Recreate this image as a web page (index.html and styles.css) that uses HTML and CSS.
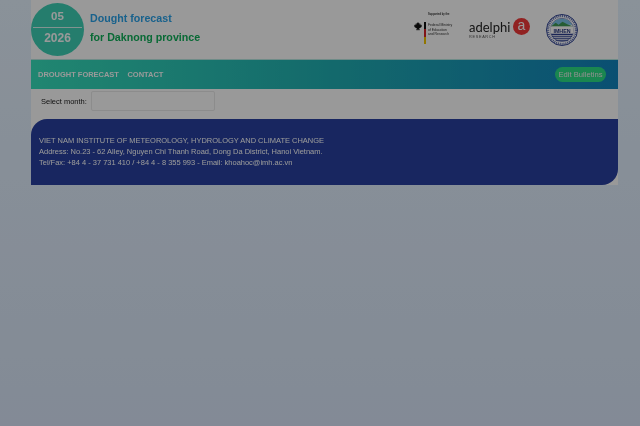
FILE: index.html
```html
<!DOCTYPE html>
<html lang="en">

<head>
  <meta charset="UTF-8" />
  <title>Drought forecast</title>
  <meta name="viewport" content="width=device-width, initial-scale=1.0" />
  <link rel="stylesheet" href="styles.css">
</head>

<body>
  <div class="page">
    <header class="top">
      <div class="date-badge">
        <span class="date-month">05</span>
        <span class="date-year">2026</span>
      </div>
      <div class="titles">
        <div class="title-blue">Dought forecast</div>
        <div class="title-green">for Daknong province</div>
      </div>
      <div class="logos">
        <div class="logo-bmbf">
          <div class="bmbf-top">Supported by the</div>
          <div class="bmbf-row">
            <svg class="bmbf-eagle" width="8" height="9" viewBox="0 0 8 9">
              <path d="M4 0 L4.800 1.200 L5.500 1 L5.200 3 L6 1.500 L6.500 2 L6.200 3.500 L7 2.500 L7.800 3.500 L7.500 5 L6 6 L5.200 6 L5.800 8.500 L4.500 7.500 L4 9 L3.500 7.500 L2.200 8.500 L2.800 6 L2 6 L0.500 5 L0.200 3.500 L1 2.500 L1.800 3.500 L1.500 2 L2 1.500 L2.800 3 L2.500 1 L3.200 1.200 Z" fill="#111" />
            </svg>
            <div class="bmbf-flag"><i class="flag-black"></i><i class="flag-red"></i><i class="flag-gold"></i></div>
            <div class="bmbf-text">Federal Ministry<br>of Education<br>and Research</div>
          </div>
        </div>
        <div class="logo-adelphi">
          <div class="adelphi-words">
            <div class="adelphi-name">adelphi</div>
            <div class="adelphi-sub">RESEARCH</div>
          </div>
          <div class="adelphi-mark">a</div>
        </div>
        <svg class="logo-imhen" width="32" height="32" viewBox="0 0 33 33">
          <circle cx="16.500" cy="16.500" r="16" fill="#fff" stroke="#2c3f8f" stroke-width="1" />
          <circle cx="16.500" cy="16.500" r="14.500" fill="none" stroke="#5a6bb0" stroke-width="2.400" stroke-dasharray="1 1" />
          <circle cx="16.500" cy="16.500" r="12" fill="#fff" stroke="#2c3f8f" stroke-width="0.600" />
          <path d="M6 11 A12 12 0 0 1 27 11 Z" fill="#7cc4e8" />
          <path d="M5 13 L10 9 L13 11 L17 8 L22 10.500 L28 13 Z" fill="#3f9a55" />
          <rect x="4.500" y="13" width="24" height="7" fill="#fff" />
          <path d="M5.500 21 H27.500 M6 23 H27 M7.500 25 H25.500 M10 27 H23" stroke="#2c3f8f" stroke-width="1.100" />
          <text x="16.500" y="19.300" class="imhen-text">IMHEN</text>
        </svg>
      </div>
    </header>

    <nav class="menu">
      <a class="menu-link">DROUGHT FORECAST</a>
      <a class="menu-link">CONTACT</a>
      <button class="edit-btn" type="button">Edit Bulletins</button>
    </nav>

    <form class="month-row">
      <label class="month-label" for="month">Select month:</label>
      <input class="month-input" id="month" type="text" />
    </form>

    <footer class="foot">
      <p>VIET NAM INSTITUTE OF METEOROLOGY, HYDROLOGY AND CLIMATE CHANGE</p>
      <p>Address: No.23 - 62 Alley, Nguyen Chi Thanh Road, Dong Da District, Hanoi Vietnam.</p>
      <p>Tel/Fax: +84 4 - 37 731 410 / +84 4 - 8 355 993 - Email: khoahoc@imh.ac.vn</p>
    </footer>
  </div>

  <div class="shade"></div>
</body>

</html>
```

FILE: styles.css
```css
* {
  box-sizing: border-box;
  margin: 0;
  padding: 0;
}

html,
body {
  height: 100%;
}

body {
  font-family: 'Liberation Sans', Arial, sans-serif;
  background: linear-gradient(180deg, #e6f3ff, #dae7fa);
  overflow: hidden;
}

/* modal backdrop over the whole page */
.shade {
  position: fixed;
  top: 0;
  left: 0;
  right: 0;
  bottom: 0;
  background: rgba(0, 0, 0, 0.4);
}

.page {
  width: 587px;
  margin-left: 31px;
  background: #fff;
  filter: blur(0.35px);
}

.top {
  display: flex;
  align-items: flex-start;
  height: 59px;
  padding-top: 3px;
}

.date-badge {
  width: 53px;
  height: 53px;
  border-radius: 50%;
  background: #3fd0b6;
  color: #fff;
  font-weight: bold;
  font-size: 11.500px;
  display: flex;
  flex-direction: column;
  align-items: center;
  flex-shrink: 0;
}

.date-month {
  height: 25px;
  width: 49px;
  text-align: center;
  padding-top: 7px;
  border-bottom: 1px solid rgba(255, 255, 255, 0.8);
}

.date-year {
  padding-top: 3px;
  font-size: 12px;
}

.titles {
  margin-left: 6px;
  font-size: 10.670px;
  font-weight: bold;
  padding-top: 9px;
}

.title-blue {
  color: #2ba3ea;
  height: 19px;
}

.title-green {
  color: #10b15a;
}

.logos {
  margin-left: auto;
  display: flex;
  align-items: flex-start;
  padding-right: 40px;
  padding-top: 10px;
}

.logo-bmbf {
  width: 38px;
  flex-shrink: 0;
}

.bmbf-top {
  font-size: 2.600px;
  font-weight: bold;
  line-height: 4px;
  margin-left: 13px;
  white-space: nowrap;
  color: #333;
}

.bmbf-row {
  display: flex;
  margin-top: 5px;
}

.bmbf-eagle {
  margin-top: 0;
  margin-left: -1px;
  margin-right: 2px;
  flex-shrink: 0;
}

.bmbf-flag {
  width: 2px;
  height: 22px;
  display: flex;
  flex-direction: column;
  flex-shrink: 0;
}

.bmbf-flag i {
  flex: 1;
}

.flag-black {
  background: #111;
}

.flag-red {
  background: #d8232a;
}

.flag-gold {
  background: #f2c500;
}

.bmbf-text {
  font-size: 3.400px;
  line-height: 4.600px;
  margin-left: 2px;
  margin-top: 1px;
  white-space: nowrap;
  color: #333;
}

.logo-adelphi {
  display: flex;
  align-items: flex-start;
  margin-left: 16px;
  margin-top: 5px;
}

.adelphi-words {
  width: 40px;
  padding-top: 1px;
}

.adelphi-name {
  font-family: Lato, sans-serif;
  font-size: 13px;
  line-height: 16px;
  color: #222;
}

.adelphi-sub {
  font-size: 3.800px;
  line-height: 5px;
  letter-spacing: 0.700px;
  color: #555;
}

.adelphi-mark {
  width: 17px;
  height: 17px;
  border-radius: 50%;
  background: #f23a3a;
  color: #fff;
  font-size: 14px;
  line-height: 15px;
  text-align: center;
  margin-left: 4px;
}

.logo-imhen {
  margin-left: 16px;
  margin-top: 1px;
}

.imhen-text {
  font-size: 5.500px;
  font-weight: bold;
  text-anchor: middle;
  fill: #24357f;
}

.menu {
  display: flex;
  align-items: center;
  height: 30px;
  padding: 0 12px 0 7px;
  border-top: 1px solid #b8e8e2;
  background: linear-gradient(90deg, #37e0bc 0%, #21b1b4 50%, #1284be 100%);
}

.menu-link {
  color: #fff;
  font-size: 7.470px;
  font-weight: bold;
  margin-right: 8.500px;
}

.edit-btn {
  margin-left: auto;
  height: 15px;
  width: 51px;
  border: none;
  border-radius: 8px;
  background: #2ce085;
  color: #eee;
  font-family: inherit;
  font-size: 7.600px;
  white-space: nowrap;
}

.month-row {
  display: flex;
  align-items: center;
  height: 30px;
  padding: 0 0 6px 10px;
}

.month-label {
  font-size: 7.500px;
  color: #222;
  margin-right: 4px;
}

.month-input {
  width: 124px;
  height: 20px;
  border: 1px solid #eaeaea;
  border-radius: 2px;
  background: #fff;
}

.foot {
  height: 66px;
  padding: 16px 8px 0;
  background: #2840a0;
  color: #fff;
  font-size: 7.470px;
  line-height: 11px;
  border-radius: 16px 0 16px 0;
}
```
